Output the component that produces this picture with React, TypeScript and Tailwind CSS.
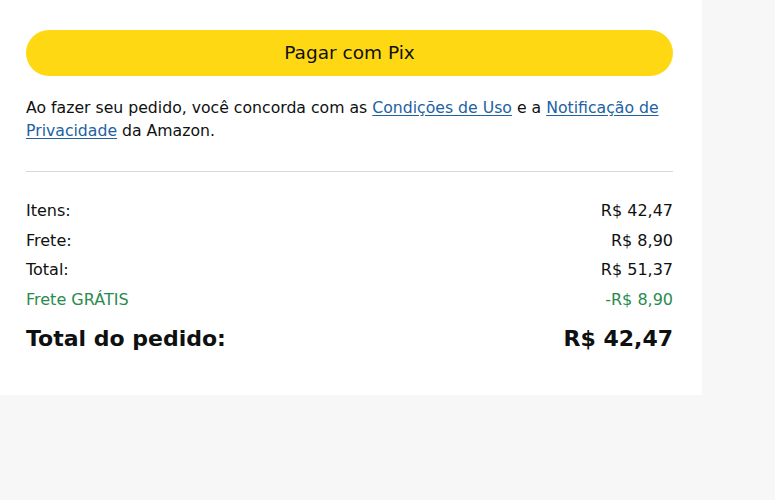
export default function App() {
  const font = { fontFamily: '"DejaVu Sans", "Noto Sans", Arial, sans-serif' };
  return (
    <div className="min-h-[500px] w-full bg-[#f7f7f7]" style={font}>
      <div className="w-[702px] bg-white pl-[26px] pr-[29px] pt-[30px] pb-[40px] text-[#0f1111]">
        <button className="flex h-[46px] w-full items-center justify-center rounded-full bg-[#ffd814] text-[18.5px] text-[#0f1111]">
          Pagar com Pix
        </button>
        <p className="mt-[20px] text-[15.7px] leading-[23px]">
          Ao fazer seu pedido, você concorda com as{" "}
          <a className="text-[#2162a1] underline underline-offset-2">Condições de Uso</a> e a{" "}
          <a className="text-[#2162a1] underline underline-offset-2">Notificação de Privacidade</a> da Amazon.
        </p>
        <div className="mt-[29px] h-px bg-[#d5d9d9]" />
        <div className="mt-[24px] flex flex-col text-[16px] leading-[29.5px]">
          <div className="flex justify-between"><span>Itens:</span><span>R$ 42,47</span></div>
          <div className="flex justify-between"><span>Frete:</span><span>R$ 8,90</span></div>
          <div className="flex justify-between"><span>Total:</span><span>R$ 51,37</span></div>
          <div className="flex justify-between text-[#2b8a4e]"><span>Frete GRÁTIS</span><span>-R$ 8,90</span></div>
        </div>
        <div className="mt-[9px] flex justify-between text-[22px] font-bold leading-[32px]">
          <span>Total do pedido:</span><span>R$ 42,47</span>
        </div>
      </div>
    </div>
  );
}
